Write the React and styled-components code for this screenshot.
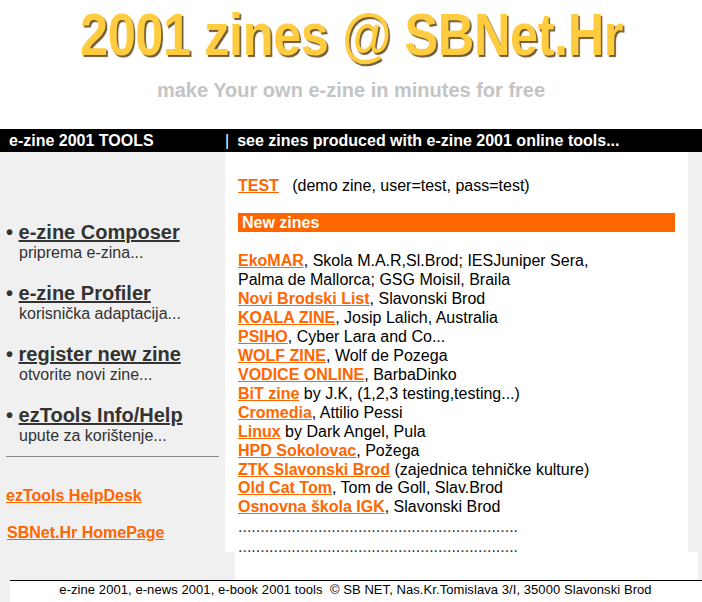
import React from "react";
import styled, { createGlobalStyle } from "styled-components";

const GlobalStyle = createGlobalStyle`
  html, body { margin: 0; padding: 0; background: #ffffff; }
  body { font-family: "Liberation Sans", Arial, sans-serif; color: #000; }
`;

const Page = styled.div`
  width: 702px;
  height: 602px;
  display: flex;
  flex-direction: column;
  overflow: hidden;
`;

const Header = styled.header`
  height: 129px;
  display: flex;
  flex-direction: column;
  align-items: center;
`;

const Logo = styled.div`
  height: 70px;
  font-size: 60px;
  line-height: 70px;
  font-weight: bold;
  color: #ffcc40;
  text-shadow: 2px 2px 1px #6e5a36;
  white-space: nowrap;
  transform: scaleX(0.842);
  transform-origin: center;
  letter-spacing: -0.5px;
`;

const Tagline = styled.div`
  margin-top: 9px;
  font-size: 20px;
  font-weight: bold;
  color: #c4c4c4;
`;

const Bar = styled.div`
  height: 23px;
  background: #000;
  color: #fff;
  font-size: 16px;
  font-weight: bold;
  display: grid;
  grid-template-columns: 225px 1fr;
  align-items: center;
  white-space: nowrap;
`;

const BarCell = styled.div`
  padding-left: ${(p) => p.$pad}px;
  display: flex;
  align-items: center;
  gap: 8px;
`;

const Pipe = styled.span`
  font-weight: normal;
`;

const Main = styled.div`
  height: 400px;
  display: grid;
  grid-template-columns: 225px 463px 14px;
`;

const Side = styled.aside`
  background: #f0f0f0;
  padding: 69px 6px 0 6px;
  display: flex;
  flex-direction: column;
`;

const Tools = styled.div`
  display: flex;
  flex-direction: column;
  gap: 19.6px;
  color: #333;
`;

const Tool = styled.div``;

const ToolTitle = styled.div`
  font-size: 20px;
  line-height: 23px;
  font-weight: bold;
  white-space: nowrap;
`;

const ToolLink = styled.a`
  color: #333;
  text-decoration: underline;
`;

const ToolSub = styled.div`
  font-size: 16px;
  line-height: 18.4px;
  padding-left: 13px;
`;

const Rule = styled.div`
  margin-top: 11px;
  border-top: 1px solid #8a8a8a;
`;

const SideLink = styled.a`
  display: block;
  font-size: 16px;
  line-height: 18.4px;
  font-weight: bold;
  color: #ff6600;
  text-decoration: underline;
  margin-top: ${(p) => p.$top}px;
  margin-left: ${(p) => p.$left || 0}px;
  align-self: flex-start;
`;

const Content = styled.section`
  background: #fff;
  padding: 24px 13px 0 13px;
  font-size: 16px;
`;

const OrangeLink = styled.a`
  color: #ff6600;
  font-weight: bold;
  text-decoration: underline;
`;

const TestLine = styled.div`
  line-height: 18.4px;
  margin-top: 1px;
`;

const SectionBar = styled.div`
  margin-top: 18px;
  height: 19px;
  background: #ff6600;
  color: #fff;
  font-weight: bold;
  font-size: 16px;
  line-height: 19px;
  padding-left: 4px;
  width: 433px;
`;

const List = styled.div`
  margin-top: 20px;
  line-height: 18.92px;
`;

const Line = styled.div`
  white-space: nowrap;
`;

const Dots = styled.div`
  color: #333;
  line-height: 19.5px;
`;

const Gutter = styled.div`
  background: #f0f0f0;
`;

const Strip = styled.div`
  height: 28px;
  display: grid;
  grid-template-columns: 235px 463px 4px;
`;

const Fill = styled.div`
  background: ${(p) => p.$c};
`;

const Footer = styled.footer`
  flex: 1;
  display: grid;
  grid-template-columns: 10px 1fr;
`;

const FooterText = styled.div`
  border-top: 1px solid #000;
  text-align: center;
  font-size: 13px;
  letter-spacing: 0.07px;
  line-height: 17px;
  padding-right: 1px;
  white-space: nowrap;
  color: #000;
`;

const zines = [
  ["EkoMAR", ", Skola M.A.R,Sl.Brod; IESJuniper Sera,"],
  [null, "Palma de Mallorca; GSG Moisil, Braila"],
  ["Novi Brodski List", ", Slavonski Brod"],
  ["KOALA ZINE", ", Josip Lalich, Australia"],
  ["PSIHO", ", Cyber Lara and Co..."],
  ["WOLF ZINE", ", Wolf de Pozega"],
  ["VODICE ONLINE", ", BarbaDinko"],
  ["BiT zine", " by J.K, (1,2,3 testing,testing...)"],
  ["Cromedia", ", Attilio Pessi"],
  ["Linux", " by Dark Angel, Pula"],
  ["HPD Sokolovac", ", Požega"],
  ["ZTK Slavonski Brod", " (zajednica tehničke kulture)"],
  ["Old Cat Tom", ", Tom de Goll, Slav.Brod"],
  ["Osnovna škola IGK", ", Slavonski Brod"],
];

const tools = [
  ["e-zine Composer", "priprema e-zina..."],
  ["e-zine Profiler", "korisnička adaptacija..."],
  ["register new zine", "otvorite novi zine..."],
  ["ezTools Info/Help", "upute za korištenje..."],
];

const dotRow = ".".repeat(63);

export default function App() {
  return (
    <>
      <GlobalStyle />
      <Page>
        <Header>
          <Logo>2001 zines @ SBNet.Hr</Logo>
          <Tagline>make Your own e-zine in minutes for free</Tagline>
        </Header>
        <Bar>
          <BarCell $pad={9}>e-zine 2001 TOOLS</BarCell>
          <BarCell $pad={0}>
            <Pipe>|</Pipe>
            <span>see zines produced with e-zine 2001 online tools...</span>
          </BarCell>
        </Bar>
        <Main>
          <Side>
            <Tools>
              {tools.map(([t, s]) => (
                <Tool key={t}>
                  <ToolTitle>
                    • <ToolLink href="#">{t}</ToolLink>
                  </ToolTitle>
                  <ToolSub>{s}</ToolSub>
                </Tool>
              ))}
            </Tools>
            <Rule />
            <SideLink href="#" $top={30}>ezTools HelpDesk</SideLink>
            <SideLink href="#" $top={18.6} $left={1}>SBNet.Hr HomePage</SideLink>
          </Side>
          <Content>
            <TestLine>
              <OrangeLink href="#">TEST</OrangeLink>
              {"\u00a0\u00a0 (demo zine, user=test, pass=test)"}
            </TestLine>
            <SectionBar>New zines</SectionBar>
            <List>
              {zines.map(([name, rest], i) => (
                <Line key={i}>
                  {name && <OrangeLink href="#">{name}</OrangeLink>}
                  {rest}
                </Line>
              ))}
              <Dots>{dotRow}</Dots>
              <Dots>{dotRow}</Dots>
            </List>
          </Content>
          <Gutter />
        </Main>
        <Strip>
          <Fill $c="#f0f0f0" />
          <Fill $c="#ffffff" />
          <Fill $c="#f0f0f0" />
        </Strip>
        <Footer>
          <Fill $c="#f0f0f0" />
          <FooterText>
            e-zine 2001, e-news 2001, e-book 2001 tools&nbsp; © SB NET, Nas.Kr.Tomislava 3/I, 35000 Slavonski Brod
          </FooterText>
        </Footer>
      </Page>
    </>
  );
}
